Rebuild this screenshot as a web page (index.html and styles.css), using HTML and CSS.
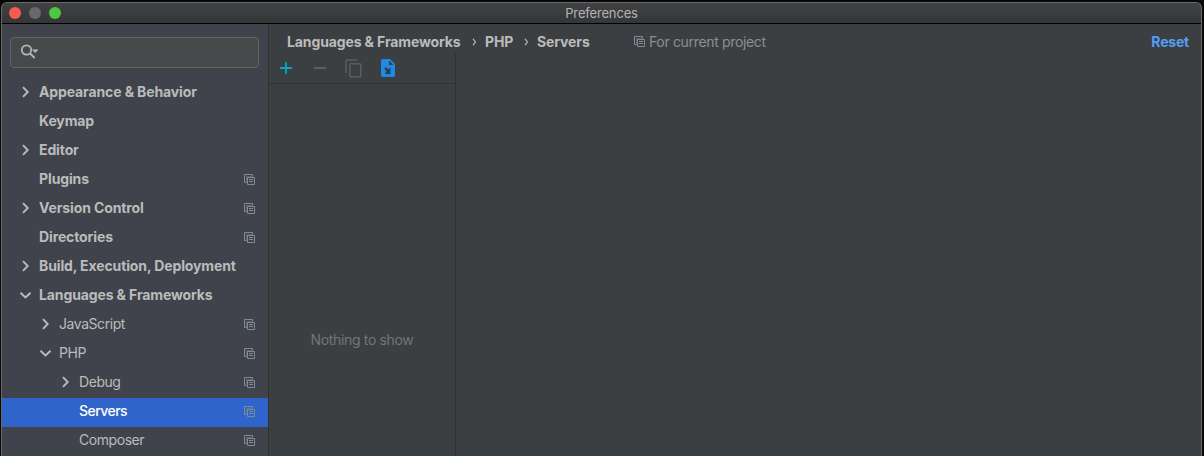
FILE: index.html
```html
<!DOCTYPE html>
<html lang="en">
<head>
<meta charset="utf-8">
<title>Preferences</title>
<link rel="stylesheet" href="styles.css">
</head>
<body>
<svg class="defs" width="0" height="0">
  <symbol id="right" viewBox="0 0 12 12"><path d="M4 1.2 8.7 6 4 10.8" fill="none" stroke="currentColor" stroke-width="1.900"/></symbol>
  <symbol id="down" viewBox="0 0 12 12"><path d="M1.500 3.800 6.500 8.500 11.500 3.800" fill="none" stroke="currentColor" stroke-width="1.900"/></symbol>
  <symbol id="project" viewBox="0 0 11 11"><path d="M2.5 8.5h-2v-8h8v2" fill="none" stroke="currentColor"/><path d="M2.500 8.500v-6h6" fill="none" stroke="currentColor" stroke-opacity=".45"/><path d="M3.500 3.500h7v7h-7zM5 5.500h4M5 7.500h4" fill="none" stroke="currentColor"/></symbol>
</svg>
<div class="window">
  <header class="titlebar">
    <div class="lights"><i class="close"></i><i class="minimize"></i><i class="maximize"></i></div>
    <span class="title">Preferences</span>
  </header>
  <div class="content">
    <aside class="sidebar">
      <div class="search">
        <svg width="18" height="16" viewBox="0 0 18 16" fill="none"><circle cx="5.500" cy="6" r="4.700" stroke="#b5b7b9" stroke-width="1.700"/><path d="m9 9.400 4.600 4.600" stroke="#b5b7b9" stroke-width="2"/><path d="M11 5.500h6.500L14.200 9z" fill="#b5b7b9"/></svg>
      </div>
      <nav class="tree">
        <div class="row"><svg class="arrow"><use href="#right"/></svg><span class="label">Appearance &amp; Behavior</span></div>
        <div class="row"><span class="arrow"></span><span class="label">Keymap</span></div>
        <div class="row"><svg class="arrow"><use href="#right"/></svg><span class="label">Editor</span></div>
        <div class="row"><span class="arrow"></span><span class="label">Plugins</span><svg class="scope"><use href="#project"/></svg></div>
        <div class="row"><svg class="arrow"><use href="#right"/></svg><span class="label">Version Control</span><svg class="scope"><use href="#project"/></svg></div>
        <div class="row"><span class="arrow"></span><span class="label">Directories</span><svg class="scope"><use href="#project"/></svg></div>
        <div class="row"><svg class="arrow"><use href="#right"/></svg><span class="label">Build, Execution, Deployment</span></div>
        <div class="row"><svg class="arrow"><use href="#down"/></svg><span class="label">Languages &amp; Frameworks</span></div>
        <div class="row child"><svg class="arrow"><use href="#right"/></svg><span class="label">JavaScript</span><svg class="scope"><use href="#project"/></svg></div>
        <div class="row child"><svg class="arrow"><use href="#down"/></svg><span class="label">PHP</span><svg class="scope"><use href="#project"/></svg></div>
        <div class="row grandchild"><svg class="arrow"><use href="#right"/></svg><span class="label">Debug</span><svg class="scope"><use href="#project"/></svg></div>
        <div class="row grandchild selected"><span class="arrow"></span><span class="label">Servers</span><svg class="scope"><use href="#project"/></svg></div>
        <div class="row grandchild"><span class="arrow"></span><span class="label">Composer</span><svg class="scope"><use href="#project"/></svg></div>
      </nav>
    </aside>
    <main class="main">
      <div class="heading">
        <span class="crumb c1">Languages &amp; Frameworks</span>
        <svg class="sep" viewBox="0 0 5 8"><path d="m1 .8 2.500 3.200L1 7.200" fill="none" stroke="#bbb" stroke-width="1.200"/></svg>
        <span class="crumb c2">PHP</span>
        <svg class="sep" viewBox="0 0 5 8"><path d="m1 .8 2.500 3.200L1 7.200" fill="none" stroke="#bbb" stroke-width="1.200"/></svg>
        <span class="crumb c3">Servers</span>
        <svg class="scope"><use href="#project"/></svg>
        <span class="hint">For current project</span>
        <span class="reset">Reset</span>
      </div>
      <div class="panes">
        <section class="list">
          <div class="toolbar">
            <svg width="12" height="12" viewBox="0 0 12 12"><path d="M6 0v12M0 6h12" stroke="#08a9bf" stroke-width="1.800"/></svg>
            <svg class="minus" width="12" height="12" viewBox="0 0 12 12"><path d="M0 6h12" stroke="#5b5d5e" stroke-width="1.800"/></svg>
            <svg class="copy" width="17" height="19" viewBox="0 0 17 19" fill="none" stroke="#5b5d5e" stroke-width="1.500"><path d="M1 14V2q0-1 1-1h10.500"/><rect x="4.800" y="4.800" width="11" height="13" rx="1"/></svg>
            <svg class="import" width="14" height="18" viewBox="0 0 14 18"><path d="M2 0h7l5 5v11a2 2 0 0 1-2 2H2a2 2 0 0 1-2-2V2a2 2 0 0 1 2-2z" fill="#1e88e5"/><path d="M8 1.500V6h4.500z" fill="#3c3f41"/><path d="M3.200 9.500 4.700 8l2.300 2.300L9.500 8.500V15H3.800l1.800-2.300z" fill="#293f55"/></svg>
          </div>
          <div class="empty"><span>Nothing to show</span></div>
        </section>
        <section class="detail"></section>
      </div>
    </main>
  </div>
</div>
</body>
</html>
```
FILE: styles.css
```css
* { box-sizing: border-box; }
body { margin: 0; height: 456px; overflow: hidden; background: #080808; font-family: Inter, sans-serif; font-size: 14px; color: #bbbbbb; }
.defs { position: absolute; }
.window { margin: 2px 2px 0 1px; height: 454px; border: 1px solid #66686a; border-bottom: 0; border-radius: 6px 6px 0 0; overflow: hidden; background: #3c3f41; }
.titlebar { height: 21px; display: grid; grid-template-columns: 100px 1fr 100px; align-items: center; border-bottom: 1px solid #000; background: linear-gradient(#414243, #353637); }
.lights { display: flex; gap: 8px; padding-left: 7px; }
.lights i { width: 12px; height: 12px; border-radius: 50%; }
.close { background: #f65b4e; }
.minimize { background: #69696b; }
.maximize { background: #4dc743; }
.title { justify-self: center; font-size: 13px; line-height: 20px; letter-spacing: -.17px; color: #b2b3b4; white-space: nowrap; }
.content { display: flex; height: 432px; }
.sidebar { width: 266px; flex: none; background: #40434c; }
.search { margin: 13px 9px 10px 8px; height: 31px; border: 1px solid #616566; border-radius: 4px; background: #454949; padding: 6px 10px; }
.search svg { display: block; }
.tree { padding-top: 1px; }
.row { height: 29px; display: flex; align-items: center; padding: 0 13px 3px 17px; }
.child { padding-left: 37px; }
.grandchild { padding-left: 57px; }
.arrow { width: 12px; height: 12px; margin-right: 8px; flex: none; color: #b9bbbc; }
.label { font-weight: 700; letter-spacing: -.12px; line-height: 20px; white-space: nowrap; }
.child .label, .grandchild .label { font-weight: 400; letter-spacing: -.44px; }
.row.selected { background: #2f65ca; }
.row.selected .label { font-weight: 500; letter-spacing: -.55px; color: #fff; }
.scope { width: 11px; height: 11px; flex: none; color: #7f8b95; }
.row .scope { margin-left: auto; }
.main { flex: 1; display: flex; flex-direction: column; border-left: 1px solid #303234; }
.heading { height: 29px; flex: none; display: flex; align-items: center; padding: 7px 12px 0 18px; line-height: 20px; white-space: nowrap; }
.crumb { font-weight: 700; letter-spacing: -.12px; }
.c1 { width: 174px; }
.c2 { width: 28px; }
.c3 { width: 53px; }
.sep { width: 5px; height: 8px; margin: 0 8px 0 11px; flex: none; }
.heading .scope { margin-left: 44px; margin-bottom: 1px; }
.hint { margin-left: 4px; letter-spacing: -.34px; color: #8c8e90; }
.reset { margin-left: auto; font-weight: 700; letter-spacing: -.2px; color: #589df6; }
.panes { flex: 1; display: flex; }
.list { width: 187px; border-right: 1px solid #303234; display: flex; flex-direction: column; }
.toolbar { height: 31px; flex: none; display: flex; align-items: center; padding-left: 11px; border-bottom: 1px solid #303234; }
.minus { margin-left: 22px; }
.copy { margin-left: 19px; }
.import { margin-left: 19px; }
.empty { flex: 1; display: flex; justify-content: center; padding-top: 246px; line-height: 20px; letter-spacing: -.34px; color: #737576; }
.detail { flex: 1; }
```
